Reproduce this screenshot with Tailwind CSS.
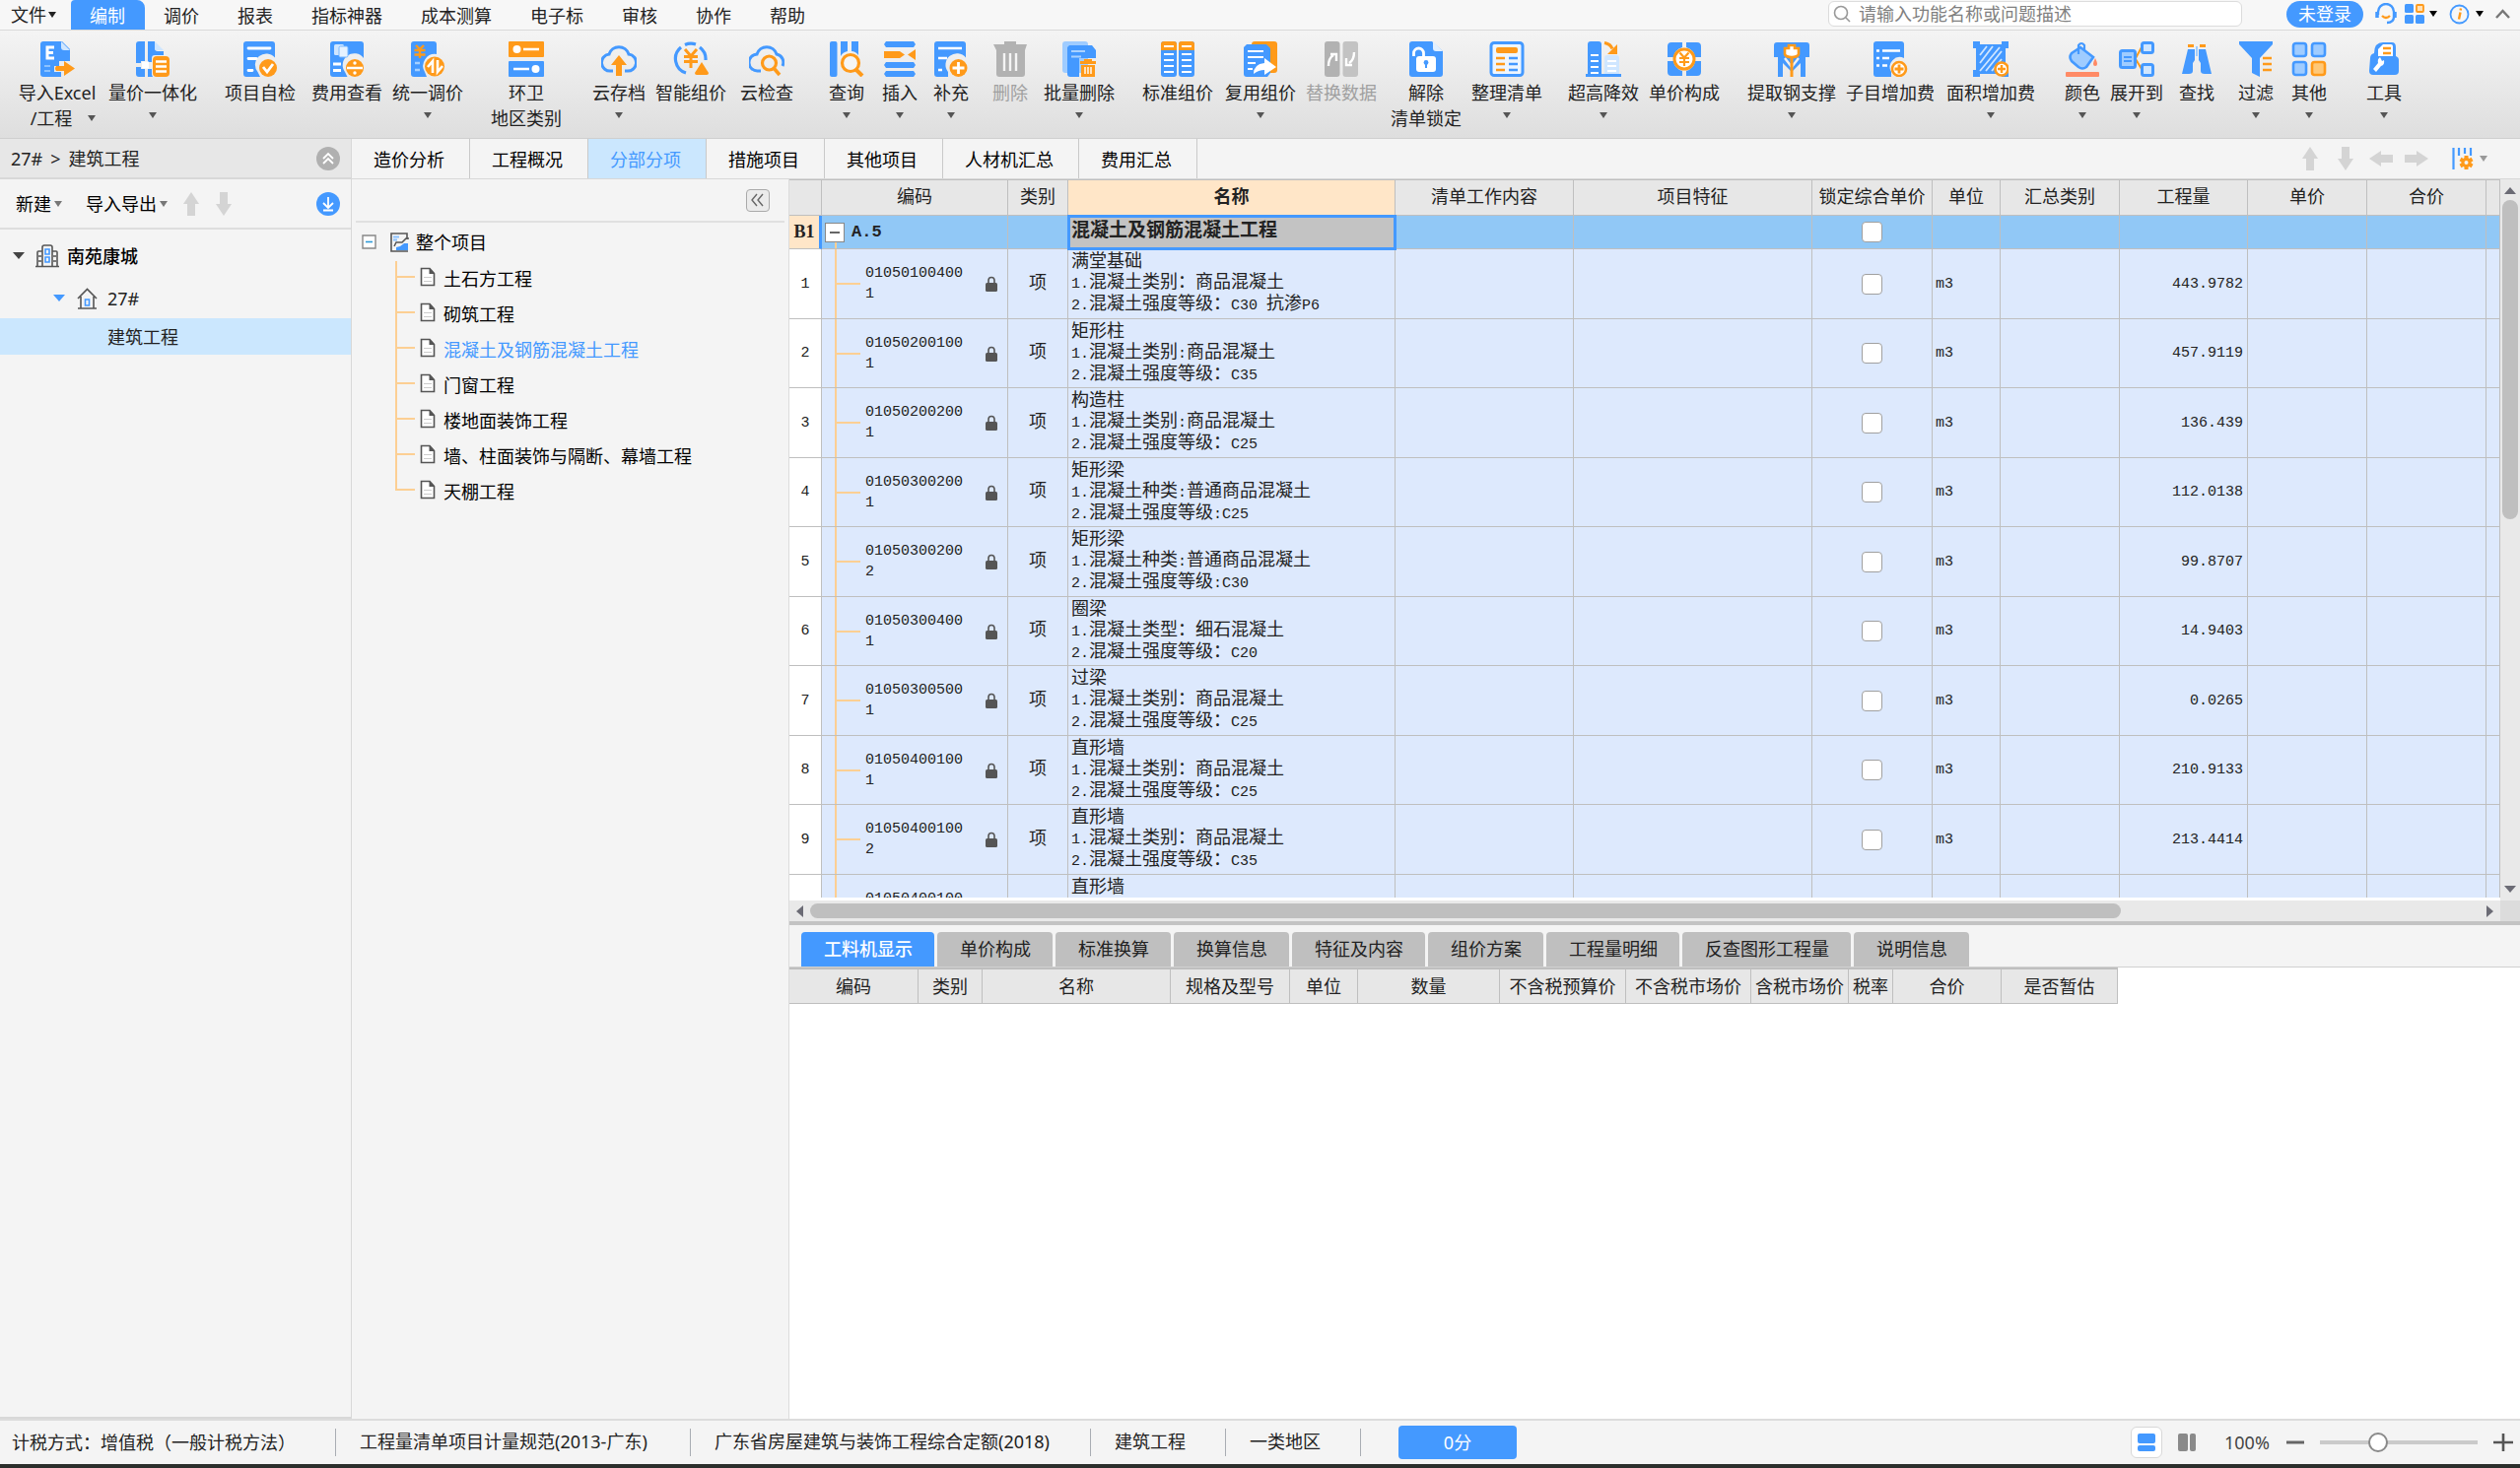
<!DOCTYPE html>
<html lang="zh-CN">
<head>
<meta charset="utf-8">
<title>工程计价</title>
<script src="https://cdn.jsdelivr.net/npm/@tailwindcss/browser@4"></script>
</head>
<body class="flex h-screen flex-col overflow-hidden bg-[#f4f4f4] font-['Noto_Sans','Noto_Sans_CJK_SC',sans-serif] text-[18px] leading-[26px] text-[#222]">

<svg class="hidden" xmlns="http://www.w3.org/2000/svg">
  <symbol id="caret" viewBox="0 0 8 6"><path d="M0 0h8L4 6z" fill="currentColor"/></symbol>
  <symbol id="arrow" viewBox="0 0 16 24"><path d="M8 0l8 12h-4v12H4V12H0z" fill="currentColor"/></symbol>
  <symbol id="lock" viewBox="0 0 12 16"><path d="M3 8V4.500a3 3 0 016 0V8" fill="none" stroke="#555" stroke-width="1.600"/><rect y="7" width="12" height="9" rx="1.500" fill="#555"/></symbol>
  <symbol id="doc" viewBox="0 0 16 20"><path d="M1.500 1.500h8.500l4.500 5V18.500h-13z" fill="#fff" stroke="#555" stroke-width="1.600"/><path d="M9.500 1v6h5.500z" fill="#555"/><path d="M4 10.500h8M4 14.500h8" stroke="#ccc"/></symbol>

  <symbol id="i-excel" viewBox="0 0 36 36"><path d="M4 0h19l8 8v12H20v5h-5v6h7v5H4a3 3 0 01-3-3V3a3 3 0 013-3z" fill="#49f"/><path d="M22 0v6q0 3 3 3h6z" fill="#cfe6ff"/><path d="M15 6H8v11h7M8 11.500h6" fill="none" stroke="#fff" stroke-width="3"/><path d="M5 25h6M5 30h6" stroke="#8bc2ff" stroke-width="2"/><path d="M17 25h8v-5l11 7.500L25 35v-5h-8q-2-2.500 0-5z" fill="#ff9a1a"/></symbol>
  <symbol id="i-merge" viewBox="0 0 36 36"><path d="M4 0h6v20H6v2H1V3a3 3 0 013-3zM13 0h7v7q0 3 3 3h6v4h-9q-3 0-3 3v4h-4zM1 26h5v2h4v8H4a3 3 0 01-3-3zM13 28h4v6l1 2h-5z" fill="#49f"/><path d="M20 0v7q0 2 2 2h7z" fill="#cfe6ff"/><rect x="7" y="20.500" width="7" height="7" fill="#fff"/><rect x="18" y="15" width="17" height="21" rx="4" fill="#ff9a1a"/><path d="M21 20.500h11M21 25.500h11M21 30.500h11" stroke="#fff" stroke-width="2.400"/></symbol>
  <symbol id="i-check" viewBox="0 0 36 36"><path d="M4 0h26a3 3 0 013 3v13.500a11 11 0 00-17.500 14.500l2.500 5H4a3 3 0 01-3-3V3a3 3 0 013-3z" fill="#49f"/><path d="M6 7h22M6 17.500h8M6 29.500h4" stroke="#fff" stroke-width="2.800" stroke-linecap="round"/><circle cx="26" cy="27" r="9" fill="#ff9a1a"/><path d="M21 26l4 5 6-8" fill="none" stroke="#fff" stroke-width="2.800"/></symbol>
  <symbol id="i-cost" viewBox="0 0 36 36"><path d="M4 0h28a3 3 0 013 3v14a11 11 0 00-19 14l2.500 5H4a3 3 0 01-3-3V3a3 3 0 013-3z" fill="#49f"/><rect x="5" y="3" width="10" height="11" rx="1.500" fill="#cfe6ff"/><rect x="10" y="5" width="9" height="11" rx="1.500" fill="#e6f2ff" stroke="#79b8ff"/><path d="M4 23h8M4 29.500h8" stroke="#fff" stroke-width="2.800"/><circle cx="26" cy="27" r="9" fill="#ff9a1a"/><path d="M18 27h16" stroke="#fff" stroke-width="2.500"/><circle cx="26" cy="22" r="1.700" fill="#fff"/><circle cx="26" cy="32" r="1.700" fill="#fff"/></symbol>
  <symbol id="i-adjust" viewBox="0 0 36 36"><path d="M4 0h20a3 3 0 013 3v10a12 12 0 00-12 18l2 5H4a3 3 0 01-3-3V3a3 3 0 013-3z" fill="#49f"/><path d="M6 4l4 4 4-4M4.500 9h11M4.500 13.500h11M10 8v9" fill="none" stroke="#ff9a1a" stroke-width="2.400"/><path d="M5 22h5M5 29h5" stroke="#a5d0ff" stroke-width="2.600"/><circle cx="25" cy="25.500" r="10" fill="#ff9a1a"/><path d="M23 32V20l-5 6M28 19v12l5-6" fill="none" stroke="#fff" stroke-width="2.600"/></symbol>
  <symbol id="i-region" viewBox="0 0 36 36"><rect width="36" height="16" rx="1" fill="#ff9a1a"/><rect y="20" width="36" height="16" rx="1" fill="#49f"/><circle cx="8.500" cy="8" r="4" fill="#fff"/><path d="M15 8h16M5 28h16" stroke="#fff" stroke-width="2.600"/><circle cx="27.500" cy="28" r="4" fill="#fff"/></symbol>
  <symbol id="i-cloudup" viewBox="0 0 36 36"><path d="M12 30H10A8.500 8.500 0 018 13a10.500 10.500 0 0120 0 8.500 8.500 0 01-2 17h-2" fill="none" stroke="#49f" stroke-width="3"/><path d="M18 14l8 10h-5v11h-6V24h-5z" fill="#ff9a1a"/></symbol>
  <symbol id="i-smart" viewBox="0 0 36 36"><path d="M13 32A15 15 0 018 6M12 3.500a15 15 0 0111-.500M27 6a15 15 0 016 13" fill="none" stroke="#49f" stroke-width="3.200"/><path d="M12 8l6 7 6-7M11 15.500h14M11 20.500h14M18 15v12" fill="none" stroke="#ff9a1a" stroke-width="3"/><path d="M29 21l7 11q0 2-2 2H24q-2 0-2-2z" fill="#ff9a1a"/></symbol>
  <symbol id="i-cloudq" viewBox="0 0 36 36"><path d="M12 30H9A8.500 8.500 0 018 13a10.500 10.500 0 0120 0 8.500 8.500 0 016 12" fill="none" stroke="#49f" stroke-width="3"/><circle cx="20.500" cy="22" r="7" fill="none" stroke="#ff9a1a" stroke-width="3.200"/><path d="M25 27l6 7" stroke="#ff9a1a" stroke-width="3.500"/></symbol>
  <symbol id="i-query" viewBox="0 0 36 36"><rect x="1" width="7.500" height="36" rx="2" fill="#49f"/><path d="M12 0h7v10q-5 1-7 5zM23 0h7v14q-3-4-7-4z" fill="#49f"/><circle cx="22" cy="22" r="8.500" fill="#f5f5f5" stroke="#ff9a1a" stroke-width="3.200"/><path d="M28 29l6 6" stroke="#ff9a1a" stroke-width="4"/></symbol>
  <symbol id="i-insert" viewBox="0 0 36 36"><path d="M4 0h28l2 3-2 3H4L2 3zM4 21h28l2 3-2 3H4l-2-3zM4 30h28l2 3-2 3H4l-2-3z" fill="#49f"/><path d="M2 10h16l5 3.500-5 3.500H2zM34 8v11l-8-5.500z" fill="#ff9a1a"/></symbol>
  <symbol id="i-add" viewBox="0 0 36 36"><path d="M4 0h26a3 3 0 013 3v13.500A11 11 0 0015 31v5H4a3 3 0 01-3-3V3a3 3 0 013-3z" fill="#49f"/><path d="M5 7h24M5 17h9M5 29h4" stroke="#fff" stroke-width="2.600"/><circle cx="25.500" cy="27" r="9" fill="#ff9a1a"/><path d="M19.500 27h12M25.500 21v12" stroke="#fff" stroke-width="2.800"/></symbol>
  <symbol id="i-trash" viewBox="0 0 36 36"><path d="M12 0h12v3h11l-2 6v24a3 3 0 01-3 3H7a3 3 0 01-3-3V9L1 3h11z" fill="#b2b2b2"/><path d="M12 12v18M18 12v18M24 12v18" stroke="#f4f4f4" stroke-width="2.400"/></symbol>
  <symbol id="i-batchdel" viewBox="0 0 36 36"><rect x="1" width="26" height="32" rx="3" fill="#9fccff"/><path d="M8 4h23l4 5v8H18v19H9a3 3 0 01-3-3V6z" fill="#49f"/><path d="M10 10h14M10 15.500h10" stroke="#a9d2ff" stroke-width="2"/><path d="M19 20h4v-2h8v2h4v3H19zM20 24h14v12H20z" fill="#ff9a1a"/><path d="M24 26v7M27 26v7M30 26v7" stroke="#fff" stroke-width="1.400"/></symbol>
  <symbol id="i-standard" viewBox="0 0 36 36"><rect x="1" width="16" height="36" rx="3" fill="#49f"/><rect x="19" width="16" height="36" rx="3" fill="#49f"/><path d="M1 9V3a3 3 0 013-3h10a3 3 0 013 3v6zM19 9V3a3 3 0 013-3h10a3 3 0 013 3v6z" fill="#ff9a1a"/><path d="M4 5h10M22 5h10M4 13h10M4 19h10M4 25h10M4 31h10M22 13h10M22 19h10M22 25h10M22 31h10" stroke="#fff" stroke-width="2"/></symbol>
  <symbol id="i-reuse" viewBox="0 0 36 36"><rect x="9" width="26" height="32" rx="3" fill="#ff9a1a"/><path d="M4 3h20l4 4v25l-3 4H4a3 3 0 01-3-3V6z" fill="#49f"/><path d="M5 10h16M5 16h16M5 22h8M5 28h5" stroke="#fff" stroke-width="2"/><path d="M11 33q0-10 11-11v-5l12 9-12 8v-5q-6 0-11 4z" fill="#fff"/></symbol>
  <symbol id="i-replace" viewBox="0 0 36 36"><rect x="1" width="15.500" height="36" rx="3" fill="#b2b2b2"/><rect x="19.500" width="15.500" height="36" rx="3" fill="#c3c3c3"/><path d="M5 25q0-8 5-11M7 13h6v7M31 11q0 8-5 11M29 24h-6v-7" fill="none" stroke="#fff" stroke-width="2.400"/></symbol>
  <symbol id="i-unlock" viewBox="0 0 36 36"><path d="M4 0h20l11 10v23a3 3 0 01-3 3H4a3 3 0 01-3-3V3a3 3 0 013-3z" fill="#49f"/><path d="M25 0v7q0 3 3 3h7z" fill="#e2f0ff"/><path d="M5.500 15v-3a5 5 0 0110 0v5" fill="none" stroke="#fff" stroke-width="2.800"/><rect x="8" y="15" width="20" height="16" rx="3" fill="#fff"/><circle cx="18" cy="21.500" r="2.400" fill="#49f"/><path d="M18 22v5" stroke="#49f" stroke-width="2"/></symbol>
  <symbol id="i-tidy" viewBox="0 0 36 36"><rect x="2" y="1.500" width="32" height="33" rx="3" fill="#eef6ff" stroke="#49f" stroke-width="3"/><rect x="7" y="6" width="22" height="6" rx="2" fill="#ff9a1a"/><path d="M7 17h9M7 23h9M7 29h9" stroke="#ff9a1a" stroke-width="2.600"/><path d="M20 17h9M20 23h9M20 29h9" stroke="#49f" stroke-width="2.600"/></symbol>
  <symbol id="i-height" viewBox="0 0 36 36"><path d="M2 3a3 3 0 013-3h8a3 3 0 013 3v33H2z" fill="#49f"/><path d="M5 14h8M5 20h8M5 26h8M5 32h8" stroke="#fff" stroke-width="2.200"/><path d="M19 17a3 3 0 013-3h9a3 3 0 013 3v18H19z" fill="#cfe6ff"/><path d="M22 20h9M22 25h9M22 30h9" stroke="#fff" stroke-width="2.200"/><path d="M0 34.500h36" stroke="#49f" stroke-width="3"/><path d="M19 1.500q6 1 8 6" fill="none" stroke="#ff9a1a" stroke-width="3.200"/><path d="M32 3v10H22z" fill="#ff9a1a"/></symbol>
  <symbol id="i-price" viewBox="0 0 36 36"><path d="M5 1h11v5a13 13 0 00-9 10H1V5a4 4 0 014-4zM20 1h11a4 4 0 014 4v11h-6a13 13 0 00-9-10zM1 20h6a13 13 0 009 10v5H5a4 4 0 01-4-4zM29 20h6v11a4 4 0 01-4 4H20v-5a13 13 0 009-10z" fill="#49f"/><circle cx="18" cy="18" r="10" fill="#fff" stroke="#ff9a1a" stroke-width="3"/><path d="M13.500 11.500l4.500 5 4.500-5M13 17h10M13 21h10M18 16v9" fill="none" stroke="#ff9a1a" stroke-width="2.200"/></symbol>
  <symbol id="i-steel" viewBox="0 0 36 36"><path d="M3 1h30q3 0 3 3v12h-4v20h-5V22l-9 9-9-9v14H4V16H0V4q0-3 3-3z" fill="#49f"/><path d="M11 17l7 9 7-9" fill="none" stroke="#f0f0f0" stroke-width="2.400"/><path d="M18 14v22" stroke="#ff9a1a" stroke-width="3"/><path d="M15 4h6v3h4v6q-1 3-7 3t-7-3V7h4z" fill="#fff" stroke="#ff9a1a" stroke-width="2.600"/></symbol>
  <symbol id="i-sub" viewBox="0 0 36 36"><path d="M4 0h25a3 3 0 013 3v14a10 10 0 00-13 14v5H4a3 3 0 01-3-3V3a3 3 0 013-3z" fill="#49f"/><path d="M4 9.500h3M10 9.500h18M4 17h3M10 17h7M4 24.500h3M10 24.500h5" stroke="#fff" stroke-width="2.400"/><circle cx="27" cy="28" r="7" fill="#fff" stroke="#ff9a1a" stroke-width="2.600"/><path d="M22.500 28h9M27 23.500v9" stroke="#ff9a1a" stroke-width="2.800"/></symbol>
  <symbol id="i-area" viewBox="0 0 36 36"><path d="M0 0h7v3h22V0h7v7h-3v22h3v7h-7v-3H7v3H0v-7h3V7H0z" fill="#49f"/><path d="M7 14l7-9M7 22L20 5M7 30L27 6M13 30L29 10M19 30l10-12" stroke="#cfe6ff" stroke-width="1.800"/><circle cx="29" cy="28" r="6.500" fill="#fff" stroke="#ff9a1a" stroke-width="2.600"/><path d="M25 28h8M29 24v8" stroke="#ff9a1a" stroke-width="2.400"/></symbol>
  <symbol id="i-color" viewBox="0 0 36 36"><path d="M7 12l9-6 13 10-7 10q-4 3-8 0l-7-6q-3-4 0-8z" fill="#9fccff" stroke="#49f" stroke-width="2.600"/><path d="M14 13V4q3-4 6 0v5" fill="none" stroke="#49f" stroke-width="2.200"/><path d="M31 17q4 8 0 8t0-8z" fill="#ff8a65"/><rect x="1" y="31" width="34" height="5" rx="1" fill="#ff8a65"/></symbol>
  <symbol id="i-expand" viewBox="0 0 36 36"><path d="M17 17l6-11M17 18l6 10" stroke="#ff9a1a" stroke-width="2"/><rect x="1.500" y="9.500" width="15" height="17" rx="2" fill="#9fccff" stroke="#49f" stroke-width="3"/><path d="M5 16h8M5 20h8" stroke="#49f" stroke-width="2"/><rect x="23.500" y="1.500" width="11" height="10" rx="2" fill="#cfe6ff" stroke="#49f" stroke-width="3"/><rect x="23.500" y="23.500" width="11" height="11" rx="2" fill="#cfe6ff" stroke="#49f" stroke-width="3"/></symbol>
  <symbol id="i-find" viewBox="0 0 36 36"><path d="M9 8h7v11l-2 3v8q0 3-4 3H3zM20 8h7l6 25h-7q-4 0-4-3v-8l-2-3z" fill="#49f"/><path d="M9 4.500h6M21 4.500h6" stroke="#ff9a1a" stroke-width="3"/><path d="M18 5v10" stroke="#9fccff" stroke-width="2"/></symbol>
  <symbol id="i-filter" viewBox="0 0 36 36"><path d="M1 0h34v3L22 17v19l-8-4V17L1 3z" fill="#49f"/><path d="M25 17h9M25 23h9M25 29h9" stroke="#ff9a1a" stroke-width="2.600"/></symbol>
  <symbol id="i-other" viewBox="0 0 36 36"><g fill="#9fccff" stroke="#49f" stroke-width="2.600"><rect x="2" y="2" width="13" height="13" rx="2.500"/><rect x="21" y="2" width="13" height="13" rx="2.500"/><rect x="2" y="21" width="13" height="13" rx="2.500"/></g><rect x="21" y="21" width="13" height="13" rx="2.500" fill="#ffc878" stroke="#ff9a1a" stroke-width="2.600"/></symbol>
  <symbol id="i-tool" viewBox="0 0 36 36"><path d="M4 17q0-4 4-5 0-11 9-11h9q4 0 4 5v9q3 1 3 4v11a4 4 0 01-4 4H7a4 4 0 01-4-4z" fill="#49f"/><path d="M12 8l5-5h8q2 0 2 2v10H12z" fill="#fff"/><path d="M17 7h8M17 12h8" stroke="#ff9a1a" stroke-width="2.600"/><path d="M7 28l5-6q-1-4 2-6l2 4 2-1q1 5-3 6l-5 6z" fill="#fff"/></symbol>
</svg>

<header class="flex h-[31px] shrink-0 items-center justify-between border-b border-[#d9d9d9] bg-[#f7f7f7]">
  <nav class="flex h-[30px] leading-[32px]" aria-label="主菜单">
    <button class="flex w-[72px] items-center gap-[2px] pl-[11px]">文件<svg class="h-[6px] w-2"><use href="#caret"/></svg></button>
    <button class="rounded-tl-sm rounded-tr-lg bg-[#49f] pr-5 pl-[19px] text-white">编制</button>
    <button class="pr-5 pl-[19px]">调价</button>
    <button class="pr-5 pl-[19px]">报表</button>
    <button class="pr-5 pl-[19px]">指标神器</button>
    <button class="pr-5 pl-[19px]">成本测算</button>
    <button class="pr-5 pl-[19px]">电子标</button>
    <button class="pr-5 pl-[19px]">审核</button>
    <button class="pr-5 pl-[19px]">协作</button>
    <button class="pr-5 pl-[19px]">帮助</button>
  </nav>
  <div class="flex h-[28px] items-center self-start pr-[10px]">
    <label class="flex h-[26px] w-[420px] items-center gap-2 rounded-md border border-[#dcdcdc] bg-white pl-1">
      <svg class="size-[18px]" viewBox="0 0 18 18" fill="none" stroke="#999" stroke-width="1.600"><circle cx="8" cy="8" r="6.500"/><path d="M13 13l4 4"/></svg>
      <input type="search" aria-label="搜索功能" placeholder="请输入功能名称或问题描述" class="min-w-0 flex-1 leading-6 outline-none placeholder:text-[#808080]">
    </label>
    <button class="ml-[45px] h-[27px] w-[78px] rounded-full bg-[#49f] leading-[26px] text-white">未登录</button>
    <button class="ml-3" aria-label="客服"><svg class="size-[22px]" viewBox="0 0 22 22" fill="none"><path d="M3 12V9a8 8 0 0116 0v5q0 6-7 6" stroke="#49f" stroke-width="2.400"/><path d="M2 9v6M20 9v6" stroke="#49f" stroke-width="3.500"/><path d="M7 13q4 4 8 0" stroke="#ff9a1a" stroke-width="2.400"/></svg></button>
    <button class="ml-2 flex items-center gap-[5px]" aria-label="应用"><svg class="size-5" viewBox="0 0 20 20"><g fill="#49f"><rect width="9" height="9" rx="1.500"/><rect y="11" width="9" height="9" rx="1.500"/><rect x="11" y="11" width="9" height="9" rx="1.500"/></g><rect x="12" y="1" width="7" height="7" rx="1" fill="#ffe0b5" stroke="#ff9a1a" stroke-width="1.800"/></svg><svg class="h-[6px] w-2 text-black"><use href="#caret"/></svg></button>
    <button class="ml-3 flex items-center gap-[6px]" aria-label="关于"><svg class="size-[21px]" viewBox="0 0 21 21" fill="none"><circle cx="10.500" cy="10.500" r="9" stroke="#49f" stroke-width="1.800"/><path d="M11.500 8.500l-1.500 7M12 4.500l-.400 2" stroke="#ff9a1a" stroke-width="2.400"/></svg><svg class="h-[6px] w-2 text-black"><use href="#caret"/></svg></button>
    <button class="ml-3" aria-label="收起功能区"><svg class="h-[10px] w-[15px]" viewBox="0 0 15 10" fill="none" stroke="#777" stroke-width="2.400"><path d="M1 9l6.500-7L14 9"/></svg></button>
  </div>
</header>

<div id="ribbon" role="toolbar" aria-label="功能区" class="flex h-[110px] shrink-0 items-start border-b border-[#cfcfcf] bg-linear-to-b from-[#f4f4f4] to-[#dedede] pt-[11px] pl-[18px]"></div>

<div class="flex min-h-0 flex-1">
  <aside class="flex w-[357px] shrink-0 flex-col border-r border-b-2 border-[#d8d8d8]">
    <div class="flex h-[41px] items-center justify-between border-b-2 border-[#d8d8d8] bg-[#e7e7e7] pr-[11px] pl-[11px]">
      <span class="flex gap-2"><span>27#</span><span>&gt;</span><span>建筑工程</span></span>
      <button aria-label="收起"><svg class="size-6" viewBox="0 0 24 24" fill="none" stroke="#fff" stroke-width="1.800"><circle cx="12" cy="12" r="12" fill="#b0b0b0" stroke="none"/><path d="M7 12l5-5 5 5M7 17l5-5 5 5"/></svg></button>
    </div>
    <div class="flex h-[51px] items-center border-b-2 border-[#dedede] pr-[11px] pl-4 text-black">
      <button class="flex items-center gap-[3px]">新建<svg class="h-[6px] w-2 text-[#777]"><use href="#caret"/></svg></button>
      <button class="ml-6 flex items-center gap-[3px]">导入导出<svg class="h-[6px] w-2 text-[#777]"><use href="#caret"/></svg></button>
      <button class="ml-4 text-[#d4d4d4]" aria-label="上移"><svg class="h-6 w-4"><use href="#arrow"/></svg></button>
      <button class="ml-[17px] rotate-180 text-[#d4d4d4]" aria-label="下移"><svg class="h-6 w-4"><use href="#arrow"/></svg></button>
      <button class="ml-auto" aria-label="下载"><svg class="size-6" viewBox="0 0 24 24" fill="none" stroke="#fff" stroke-width="1.800"><circle cx="12" cy="12" r="12" fill="#49f" stroke="none"/><path d="M12 5v10M7 11l5 5 5-5M7 18.500h10"/></svg></button>
    </div>
    <ul class="pt-1">
      <li class="flex h-[45px] items-center pl-[13px] font-medium text-black"><svg class="h-[7px] w-3 text-[#444]" viewBox="0 0 12 7"><path d="M0 0h12L6 7z" fill="currentColor"/></svg>
        <svg class="mr-2 ml-[11px] size-6" viewBox="0 0 24 24" fill="none" stroke="#555" stroke-width="1.600"><path d="M7 22V3q0-2 2-2h6q2 0 2 2v19M7 7H3q-1 0-1 1v14M17 7h4q1 0 1 1v14M0 22.500h24M3 12h3M3 17h3M18 12h3M18 17h3"/><path d="M10 5h4v5h-4zM10 13h4v5h-4z" stroke="#49f"/></svg>南苑康城</li>
      <li class="flex h-[41px] items-center pl-[54px]"><svg class="h-[7px] w-3 text-[#49f]" viewBox="0 0 12 7"><path d="M0 0h12L6 7z" fill="currentColor"/></svg>
        <svg class="mr-[10px] ml-3 h-[22px] w-[21px]" viewBox="0 0 21 22" fill="none" stroke="#555" stroke-width="1.600"><path d="M1 11l9.500-9.500L20 11M4 9v12M17 9v12M1 21h19"/><path d="M8.500 12h4v6h-4z" stroke="#49f"/></svg>27#</li>
      <li class="flex h-[37px] items-center bg-[#cbe7fe] pl-[109px]">建筑工程</li>
    </ul>
  </aside>

  <div class="flex min-w-0 flex-1 flex-col">
    <div class="flex h-[41px] shrink-0 items-center justify-between border-b border-[#d8d8d8]">
      <div class="flex h-full pr-4 leading-[42px] text-black" role="tablist">
        <button class="border-r border-[#c9c9c9] pr-[25px] pl-[22px]">造价分析</button>
        <button class="border-r border-[#c9c9c9] pr-[25px] pl-[22px]">工程概况</button>
        <button class="border-r border-[#c9c9c9] bg-[#cbe7fe] pr-[25px] pl-[22px] text-[#49f]">分部分项</button>
        <button class="border-r border-[#c9c9c9] pr-[25px] pl-[22px]">措施项目</button>
        <button class="border-r border-[#c9c9c9] pr-[25px] pl-[22px]">其他项目</button>
        <button class="border-r border-[#c9c9c9] pr-[25px] pl-[22px]">人材机汇总</button>
        <button class="border-r border-[#c9c9c9] pr-[25px] pl-[22px]">费用汇总</button>
      </div>
      <div class="flex items-center gap-5 pr-[33px] text-[#d4d4d4]">
        <button aria-label="上移"><svg class="h-6 w-4"><use href="#arrow"/></svg></button>
        <button class="rotate-180" aria-label="下移"><svg class="h-6 w-4"><use href="#arrow"/></svg></button>
        <button class="-rotate-90" aria-label="左移"><svg class="h-6 w-4"><use href="#arrow"/></svg></button>
        <button class="rotate-90" aria-label="右移"><svg class="h-6 w-4"><use href="#arrow"/></svg></button>
        <button class="ml-2 flex items-center gap-[6px]" aria-label="列设置"><svg class="size-[22px]" viewBox="0 0 22 22"><path d="M1.500 0v22M7 0v8M13 0v6M19 0v8" stroke="#49f" stroke-width="2.200"/><path d="M14.500 8v14M8.500 11.500l12 7M8.500 18.500l12-7" stroke="#ff9a1a" stroke-width="4"/><circle cx="14.500" cy="15" r="5" fill="#ff9a1a"/><circle cx="14.500" cy="15" r="2" fill="#f4f4f4"/></svg><svg class="h-[6px] w-2 text-[#999]"><use href="#caret"/></svg></button>
      </div>
    </div>

    <div class="flex min-h-0 flex-1">
      <section class="w-[444px] shrink-0 border-r border-[#dcdcdc] text-black">
        <div class="mx-1 flex h-[44px] items-center justify-end border-b-2 border-[#e0e0e0] pr-[15px]">
          <button class="flex h-[23px] w-6 items-center justify-center rounded-sm border border-[#aaa] bg-[#ebebeb]" aria-label="折叠目录"><svg class="size-[14px]" viewBox="0 0 14 14" fill="none" stroke="#666" stroke-width="1.400"><path d="M6 1L1 7l5 6M12 1L7 7l5 6"/></svg></button>
        </div>
        <div class="flex h-[39px] items-center pl-[10px]">
          <svg class="size-[15px]" viewBox="0 0 15 15"><path d="M1 1h13v13H1z" fill="#fff" stroke="#888" stroke-width="1.400"/><path d="M4 7.500h7" stroke="#2f9bd8" stroke-width="1.600"/></svg>
          <svg class="mr-[7px] ml-[13px] size-5" viewBox="0 0 20 20" fill="none"><path d="M18 7V1H2v18h17" stroke="#555" stroke-width="1.600"/><path d="M4 4.500h6M4 7.500h4" stroke="#8bc2ff" stroke-width="2"/><path d="M5 14l2-4h6l4-4h3" stroke="#555" stroke-width="1.500"/><path d="M7 18v-3l4-1 4-3h4v7z" fill="#49f"/></svg>
          整个项目</div>
        <ul id="outline" class="ml-11"></ul>
      </section>

      <main class="flex min-w-0 flex-1 flex-col bg-white">
        <div class="flex h-[732px] shrink-0">
          <div class="mb-[3px] min-w-0 flex-1 overflow-hidden">
            <table class="w-full table-fixed border-separate border-spacing-0 border-t border-[#bfbfbf] font-['Liberation_Mono','Noto_Sans_CJK_SC',monospace] leading-[21px]">
              <colgroup><col class="w-[33px]"><col class="w-[189px]"><col class="w-[61px]"><col class="w-[332px]"><col class="w-[181px]"><col class="w-[242px]"><col class="w-[122px]"><col class="w-[69px]"><col class="w-[121px]"><col class="w-[130px]"><col class="w-[121px]"><col class="w-[121px]"><col></colgroup>
              <thead><tr id="bill-head" class="h-[36px] bg-[#e7e7e7]"></tr></thead>
              <tbody id="bill-body"></tbody>
            </table>
          </div>
          <div class="flex w-5 shrink-0 flex-col items-center bg-[#e9e9e9] py-2" aria-hidden="true">
            <svg class="h-[7px] w-3 rotate-180 text-[#6b6b75]" viewBox="0 0 12 7"><path d="M0 0h12L6 7z" fill="currentColor"/></svg>
            <div class="mt-[6px] h-[324px] w-4 rounded-full bg-[#bfbfbf]"></div>
            <svg class="mt-auto h-[7px] w-3 text-[#6b6b75]" viewBox="0 0 12 7"><path d="M0 0h12L6 7z" fill="currentColor"/></svg>
          </div>
        </div>
        <div class="flex h-[25px] shrink-0 border-b-4 border-[#c3c3c3] bg-[#e9e9e9]" aria-hidden="true">
          <div class="flex flex-1 items-center px-[7px]">
            <svg class="h-3 w-[7px] text-[#6b6b75]" viewBox="0 0 7 12"><path d="M7 0v12L0 6z" fill="currentColor"/></svg>
            <div class="ml-[7px] h-[15px] w-[1330px] rounded-full bg-[#bfbfbf]"></div>
            <svg class="ml-auto h-3 w-[7px] text-[#6b6b75]" viewBox="0 0 7 12"><path d="M0 0v12l7-6z" fill="currentColor"/></svg>
          </div>
          <div class="w-5 bg-[#dcdcdc]"></div>
        </div>

        <div class="flex h-[43px] shrink-0 items-end gap-[3px] border-b border-[#d0d0d0] bg-[#f4f4f4] pl-3 leading-[35px]" role="tablist">
          <button class="rounded-t-sm bg-[#49f] pr-[22px] pl-[23px] font-medium text-white">工料机显示</button>
          <button class="rounded-t-sm bg-[#bfbfbf] pr-[22px] pl-[23px]">单价构成</button>
          <button class="rounded-t-sm bg-[#bfbfbf] pr-[22px] pl-[23px]">标准换算</button>
          <button class="rounded-t-sm bg-[#bfbfbf] pr-[22px] pl-[23px]">换算信息</button>
          <button class="rounded-t-sm bg-[#bfbfbf] pr-[22px] pl-[23px]">特征及内容</button>
          <button class="rounded-t-sm bg-[#bfbfbf] pr-[22px] pl-[23px]">组价方案</button>
          <button class="rounded-t-sm bg-[#bfbfbf] pr-[22px] pl-[23px]">工程量明细</button>
          <button class="rounded-t-sm bg-[#bfbfbf] pr-[22px] pl-[23px]">反查图形工程量</button>
          <button class="rounded-t-sm bg-[#bfbfbf] pr-[22px] pl-[23px]">说明信息</button>
        </div>
        <table class="w-[1348px] table-fixed border-separate border-spacing-0 border-t-2 border-[#bfbfbf] bg-[#e7e7e7]">
          <colgroup><col class="w-[131px]"><col class="w-[65px]"><col class="w-[191px]"><col class="w-[121px]"><col class="w-[69px]"><col class="w-[144px]"><col class="w-[128px]"><col class="w-[127px]"><col class="w-[99px]"><col class="w-[45px]"><col class="w-[110px]"><col class="w-[118px]"></colgroup>
          <thead><tr id="res-head" class="h-[35px]"></tr></thead>
        </table>
      </main>
    </div>
  </div>
</div>

<footer class="flex h-[50px] shrink-0 items-center border-t-2 border-b-4 border-t-[#dcdcdc] border-b-[#2b2e2b] pr-[7px] pl-3">
  <span class="w-[328px]">计税方式：增值税（一般计税方法）</span>
  <span class="h-7 w-[360px] border-l border-[#a9adb3] pl-6">工程量清单项目计量规范(2013-广东)</span>
  <span class="h-7 w-[406px] border-l border-[#a9adb3] pl-6">广东省房屋建筑与装饰工程综合定额(2018)</span>
  <span class="h-7 w-[137px] border-l border-[#a9adb3] pl-6">建筑工程</span>
  <span class="h-7 w-[137px] border-l border-[#a9adb3] pl-6">一类地区</span>
  <span class="h-7 w-[39px] border-l border-[#a9adb3]"></span>
  <button class="h-[34px] w-[120px] rounded-sm bg-[#49f] text-white">0分</button>
  <div class="ml-auto flex items-center">
    <button class="flex h-8 w-8 items-center justify-center rounded-md border border-[#d8d8d8] bg-white" aria-label="上下布局"><svg class="h-5 w-[18px]" viewBox="0 0 18 20" fill="#49f"><rect y="1" width="18" height="10" rx="2"/><rect y="13" width="18" height="6" rx="2"/></svg></button>
    <button class="ml-4" aria-label="左右布局"><svg class="h-5 w-[18px]" viewBox="0 0 18 20" fill="#8a8a8a"><rect y="1" width="10" height="18" rx="2"/><rect x="12" y="1" width="6" height="18" rx="2"/></svg></button>
    <span class="ml-[29px] w-12 text-[#444]">100%</span>
    <button class="ml-[15px]" aria-label="缩小"><svg class="h-5 w-[18px]" viewBox="0 0 18 20"><path d="M0 10h18" stroke="#666" stroke-width="3"/></svg></button>
    <input type="range" aria-label="缩放比例" min="0" max="100" value="35" class="mx-4 h-5 w-[160px] appearance-none bg-transparent [&::-webkit-slider-runnable-track]:h-1 [&::-webkit-slider-runnable-track]:bg-[#cacaca] [&::-webkit-slider-thumb]:-mt-2 [&::-webkit-slider-thumb]:size-5 [&::-webkit-slider-thumb]:appearance-none [&::-webkit-slider-thumb]:rounded-full [&::-webkit-slider-thumb]:border-2 [&::-webkit-slider-thumb]:border-[#8a8a8a] [&::-webkit-slider-thumb]:bg-white">
    <button aria-label="放大"><svg class="size-5" viewBox="0 0 20 20"><path d="M0 10h20M10 1v18" stroke="#555" stroke-width="2.600"/></svg></button>
  </div>
</footer>

<script>
// Ribbon: icon, first line, second line ("v" = drop-down arrow), left margin, disabled
const ribbon = [
  ['excel','导入Excel','/工程','ml-0 w-20'],['merge','量价一体化','v','ml-3'],
  ['check','项目自检','','ml-7'],['cost','费用查看','','ml-4'],['adjust','统一调价','v','ml-2.5'],
  ['region','环卫','地区类别','ml-7'],
  ['cloudup','云存档','v','ml-[31px]'],['smart','智能组价','','ml-2.5'],['cloudq','云检查','','ml-3.5'],
  ['query','查询','v','ml-9'],['insert','插入','v','ml-4.5'],['add','补充','v','ml-4'],['trash','删除','','ml-6',1],['batchdel','批量删除','v','ml-4'],
  ['standard','标准组价','','ml-7'],['reuse','复用组价','v','ml-3'],['replace','替换数据','','ml-2.5',1],
  ['unlock','解除','清单锁定','ml-3.5'],['tidy','整理清单','v','ml-2.5'],
  ['height','超高降效','v','ml-6.5'],['price','单价构成','','ml-2.5'],
  ['steel','提取钢支撑','v','ml-7'],['sub','子目增加费','','ml-2.5'],['area','面积增加费','v','ml-3'],
  ['color','颜色','v','ml-[30px]'],['expand','展开到','v','ml-2.5'],['find','查找','','ml-4'],['filter','过滤','v','ml-6'],['other','其他','v','ml-4.5'],
  ['tool','工具','v','ml-10']
];
const caret = '<svg class="h-[6px] w-2 text-[#555]"><use href="#caret"/></svg>';
document.getElementById('ribbon').innerHTML = ribbon.map(([icon, a, b, ml, off]) => {
  const second = b === 'v' ? `<span class="flex h-5 items-center">${caret}</span>`
    : b === '/工程' ? `<span class="flex items-center gap-4 pl-3">${b}${caret}</span>`
    : b ? `<span>${b}</span>` : '';
  return `<button class="${ml} flex shrink-0 flex-col items-center whitespace-nowrap disabled:text-[#a0a0a0]"${off ? ' disabled' : ''}><svg class="mb-[3px] size-9"><use href="#i-${icon}"/></svg><span>${a}</span>${second}</button>`;
}).join('');

// Outline tree
const outline = ['土石方工程','砌筑工程','混凝土及钢筋混凝土工程','门窗工程','楼地面装饰工程','墙、柱面装饰与隔断、幕墙工程','天棚工程'];
document.getElementById('outline').innerHTML = outline.map((t, i) => `
  <li class="flex h-9"><span class="h-[17px] w-5 border-b-2 border-l-2 border-[#fccf93]"></span>
  <span class="-ml-5 mr-[5px] w-5 ${i < outline.length - 1 ? 'border-l-2 border-[#fccf93]' : ''}"></span>
  <a href="#" class="flex h-9 items-center gap-2 ${i === 2 ? 'text-[#49f]' : ''}"><svg class="mb-1 h-5 w-4"><use href="#doc"/></svg>${t}</a></li>`).join('');

// Bill of quantities
document.getElementById('bill-head').innerHTML = ['','编码','类别','名称','清单工作内容','项目特征','锁定综合单价','单位','汇总类别','工程量','单价','合价',''].map(t =>
  `<th class="border-r border-b border-[#bfbfbf] px-0 pt-[2px] pb-0 ${t === '名称' ? 'bg-[#ffe6c8] font-bold' : 'font-normal'}">${t}</th>`).join('');

const mix = s => s.replace(/[\x20-\x7e]+/g, m => `<span class="text-[15px] whitespace-pre">${m}</span>`);
const rows = [
  ['010501004001','满堂基础','1.混凝土类别：商品混凝土','2.混凝土强度等级：C30 抗渗P6','443.9782'],
  ['010502001001','矩形柱','1.混凝土类别:商品混凝土','2.混凝土强度等级：C35','457.9119'],
  ['010502002001','构造柱','1.混凝土类别:商品混凝土','2.混凝土强度等级：C25','136.439'],
  ['010503002001','矩形梁','1.混凝土种类:普通商品混凝土','2.混凝土强度等级:C25','112.0138'],
  ['010503002002','矩形梁','1.混凝土种类:普通商品混凝土','2.混凝土强度等级:C30','99.8707'],
  ['010503004001','圈梁','1.混凝土类型：细石混凝土','2.混凝土强度等级：C20','14.9403'],
  ['010503005001','过梁','1.混凝土类别：商品混凝土','2.混凝土强度等级：C25','0.0265'],
  ['010504001001','直形墙','1.混凝土类别：商品混凝土','2.混凝土强度等级：C25','210.9133'],
  ['010504001002','直形墙','1.混凝土类别：商品混凝土','2.混凝土强度等级：C35','213.4414'],
  ['010504001003','直形墙','','','']
];
const cell = 'border-r border-b border-[#bfbfbf] p-0';
const box = label => `<input type="checkbox" aria-label="${label}" class="mx-auto block size-[21px] appearance-none rounded-sm border border-[#a0a0a0] bg-white">`;
const blank = `<td class="${cell}"></td>`;
const group = `<tr class="h-[34px] bg-[#91c8f6] font-bold">
  <td class="border-r-[3px] border-b border-r-[#49f] border-b-[#bfbfbf] bg-[#ffe6c8] p-0 text-center font-['Liberation_Serif',serif]">B1</td>
  <td class="${cell} relative"><span class="absolute top-6 bottom-0 left-[13px] border-l-2 border-[#fccf93]"></span><span class="flex items-center gap-[7px] pl-[3px]"><button class="relative size-5 border border-[#888] bg-white" aria-label="折叠"><svg class="size-[18px]" viewBox="0 0 18 18"><path d="M4 9h10" stroke="#333" stroke-width="1.500"/></svg></button><span class="text-[17px]">A.5</span></span></td>
  ${blank}<td class="border-r border-b border-[#bfbfbf] bg-[#c3c3c3] p-0 pl-[3px] text-[19px] outline-3 -outline-offset-2 outline-[#49f]">混凝土及钢筋混凝土工程</td>
  ${blank}${blank}<td class="${cell}">${box('锁定综合单价 A.5')}</td>${blank.repeat(6)}</tr>`;
document.getElementById('bill-body').innerHTML = group + rows.map(([code, name, l1, l2, qty], i) => `
  <tr class="${i % 2 ? 'h-[70px]' : 'h-[71px]'} bg-[#dde9fd]">
  <td class="${cell} bg-white text-center text-[15px]">${qty ? i + 1 : ''}</td>
  <td class="${cell} relative"><span class="absolute inset-y-0 left-[13px] border-l-2 border-[#fccf93]"></span><span class="absolute top-[34px] left-[15px] w-6 border-t-2 border-[#fccf93]"></span><span class="flex items-center justify-between pr-[10px] pl-11"><span class="w-[100px] text-[15px] break-all">${code}</span><svg class="h-4 w-3"><use href="#lock"/></svg></span></td>
  <td class="${cell} text-center">${qty ? '项' : ''}</td>
  <td class="border-r border-b border-[#bfbfbf] px-0 pt-[3px] pb-0 pl-[3px] align-top"><div>${name}</div><div>${mix(l1)}</div><div>${mix(l2)}</div></td>
  ${blank}${blank}<td class="${cell}">${qty ? box('锁定综合单价 ' + code) : ''}</td>
  <td class="${cell} pl-[3px] text-[15px]">${qty ? 'm3' : ''}</td>${blank}
  <td class="${cell} pr-1 text-right text-[15px]">${qty}</td>${blank.repeat(3)}</tr>`).join('');

document.getElementById('res-head').innerHTML = ['编码','类别','名称','规格及型号','单位','数量','不含税预算价','不含税市场价','含税市场价','税率','合价','是否暂估'].map(t =>
  `<th class="border-r border-b border-[#bfbfbf] p-0 font-normal whitespace-nowrap">${t}</th>`).join('');
</script>
</body>
</html>
